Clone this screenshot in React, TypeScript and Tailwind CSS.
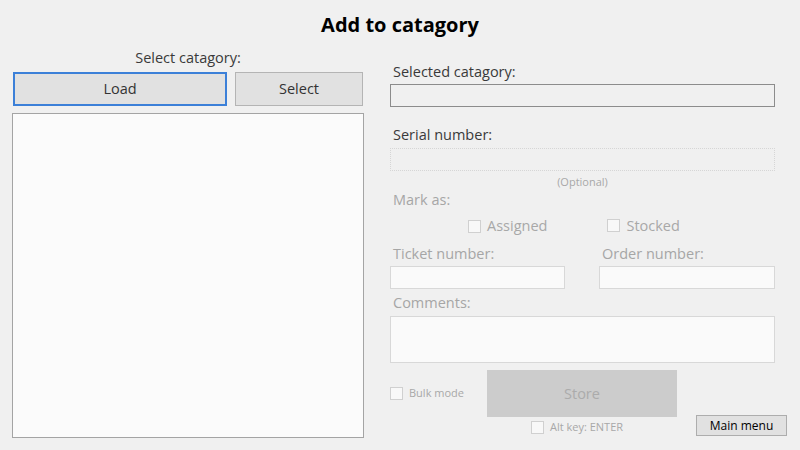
import type { ReactNode } from "react";

const FONT = "font-['Open_Sans','Noto_Sans',sans-serif]";

function CheckBox({ label, small = false }: { label: string; small?: boolean }) {
    return (
        <label className="inline-flex items-center text-[#a8a8a8]">
            <span className="h-[13px] w-[13px] border border-[#d0d0d0] bg-[#f8f8f8]" />
            <span className={small ? "ml-[6px] text-[11px]" : "ml-[6px] text-[14.5px]"}>{label}</span>
        </label>
    );
}

function Label({ children, muted = false }: { children: ReactNode; muted?: boolean }) {
    return (
        <div className={`h-[20px] pl-[3px] text-[14.5px] leading-[20px] ${muted ? "text-[#a6a6a6]" : "text-[#3a3a3a]"}`}>
            {children}
        </div>
    );
}

export default function App() {
    return (
        <div className={`flex h-[450px] w-[800px] flex-col overflow-hidden bg-[#f0f0f0] ${FONT}`}>
            <h1 className="flex h-[50px] items-center justify-center text-[20px] font-bold text-black">
                Add to catagory
            </h1>

            <div className="flex gap-[26px] pl-[12px]">
                <section className="flex w-[352px] shrink-0 flex-col">
                    <div className="h-[16px] text-center text-[14.5px] leading-[16px] text-[#3a3a3a]">
                        Select catagory:
                    </div>
                    <div className="mt-[6px] flex gap-[8px] pl-[1px]">
                        <button className="h-[34px] w-[214px] border-2 border-[#3c80d8] bg-[#e1e1e1] text-[14.5px] text-[#333]">
                            Load
                        </button>
                        <button className="h-[34px] w-[128px] border border-[#b4b4b4] bg-[#e1e1e1] text-[14.5px] text-[#333]">
                            Select
                        </button>
                    </div>
                    <div className="mt-[7px] h-[325px] border border-[#a4a4a4] bg-[#fbfbfb]" />
                </section>

                <section className="mt-[12px] flex w-[385px] shrink-0 flex-col">
                    <Label>Selected catagory:</Label>
                    <div className="mt-[2px] h-[23px] border border-[#8c8c8c] bg-[#f0f0f0]" />

                    <div className="mt-[18px]">
                        <Label>Serial number:</Label>
                    </div>
                    <div className="mt-[3px] h-[23px] border border-dotted border-[#d6d6d6] bg-[#f0f0f0]" />
                    <div className="mt-[4px] h-[14px] text-center text-[11px] leading-[14px] text-[#a8a8a8]">(Optional)</div>

                    <div className="mt-[1px]">
                        <Label muted>Mark as:</Label>
                    </div>
                    <div className="mt-[6px] flex h-[20px] items-center pl-[78px]">
                        <CheckBox label="Assigned" />
                        <div className="ml-[60px]">
                            <CheckBox label="Stocked" />
                        </div>
                    </div>

                    <div className="mt-[8px] flex gap-[34px]">
                        <div className="flex w-[175px] flex-col">
                            <Label muted>Ticket number:</Label>
                            <div className="mt-[2px] h-[23px] border border-[#d8d8d8] bg-[#fafafa]" />
                        </div>
                        <div className="flex w-[176px] flex-col">
                            <Label muted>Order number:</Label>
                            <div className="mt-[2px] h-[23px] border border-[#d8d8d8] bg-[#fafafa]" />
                        </div>
                    </div>

                    <div className="mt-[4px]">
                        <Label muted>Comments:</Label>
                    </div>
                    <div className="mt-[3px] h-[47px] border border-[#d8d8d8] bg-[#fafafa]" />

                    <div className="mt-[7px] flex">
                        <div className="flex h-[47px] w-[97px] shrink-0 items-center">
                            <CheckBox label="Bulk mode" small />
                        </div>
                        <div className="flex w-[190px] shrink-0 flex-col">
                            <button className="h-[47px] bg-[#cccccc] text-[14.5px] text-[#ababab]">Store</button>
                            <div className="mt-[3px] flex h-[14px] items-center pl-[44px]">
                                <CheckBox label="Alt key: ENTER" small />
                            </div>
                        </div>
                        <button className="mb-[-2px] ml-[19px] h-[21px] w-[91px] shrink-0 self-end border border-[#adadad] bg-[#e1e1e1] text-[12px] text-black">
                            Main menu
                        </button>
                    </div>
                </section>
            </div>
        </div>
    );
}
